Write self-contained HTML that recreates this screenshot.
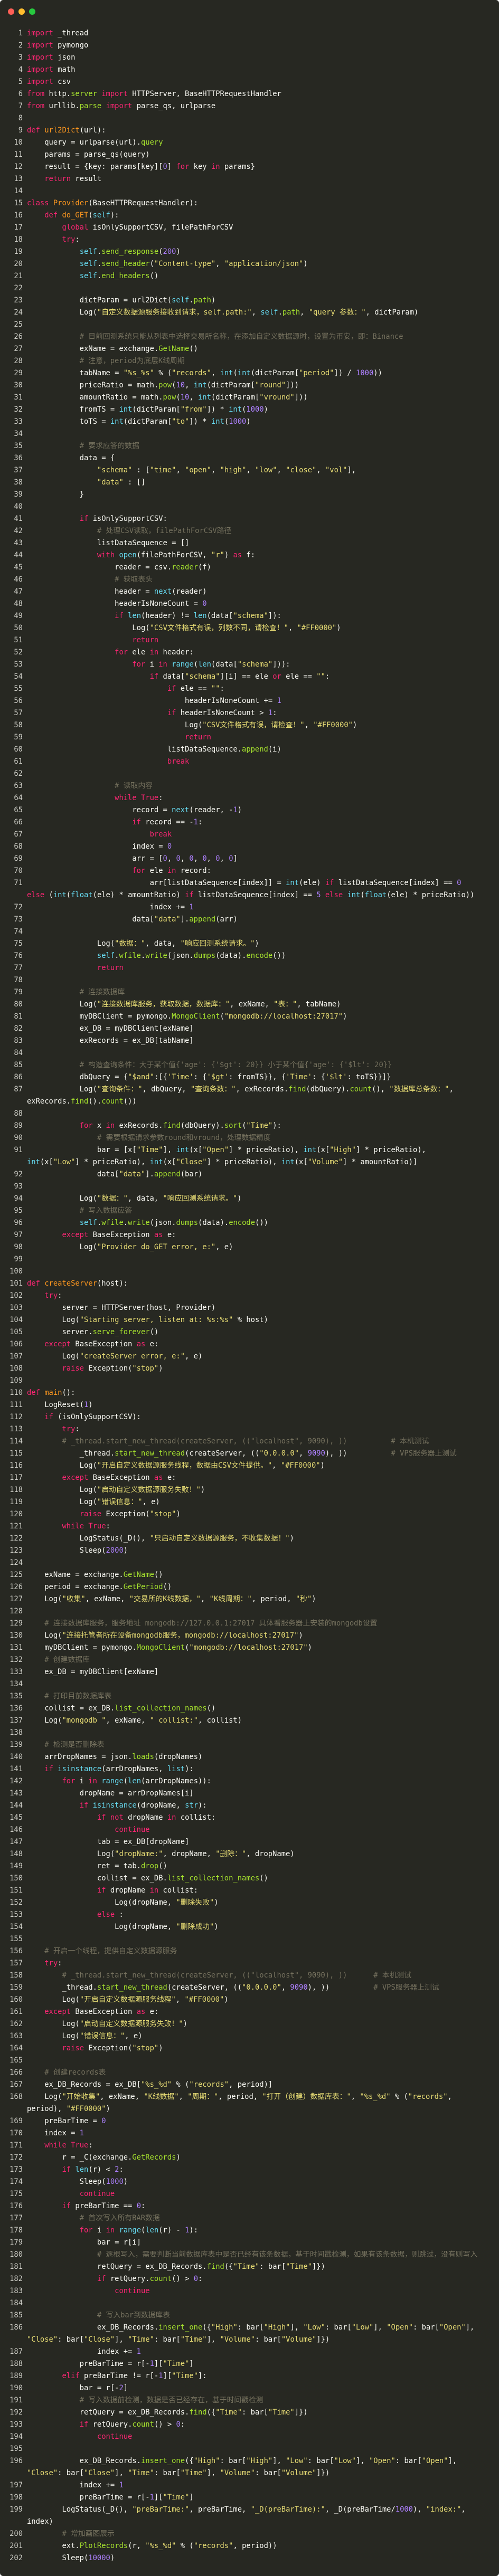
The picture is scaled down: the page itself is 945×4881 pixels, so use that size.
<!DOCTYPE html>
<html><head><meta charset="utf-8">
<style>
html,body{margin:0;padding:0;background:#fff;}
.win{position:absolute;left:0;top:0;width:945px;height:4881px;background:#272822;border-radius:6px;overflow:hidden;}
.dot{position:absolute;top:16px;width:12px;height:12px;border-radius:50%;}
.code{position:absolute;left:0;top:52px;font-family:"DejaVu Sans Mono","Liberation Mono","Noto Sans CJK SC",monospace;font-size:13.8px;line-height:23px;color:#f8f8f2;}
.code div{height:23px;white-space:pre;}
.ln{display:inline-block;width:43px;text-align:right;margin-right:8px;color:#cfcfc8;}
.k{color:#f92672}.f{color:#fd971f}.g{color:#a6e22e}.s{color:#e6db74}.n{color:#ae81ff}.c{color:#75715e}.b{color:#66d9ef}
</style></head><body>
<div class="win">
<div class="dot" style="left:15px;background:#ff5f56"></div>
<div class="dot" style="left:35px;background:#ffbd2e"></div>
<div class="dot" style="left:55px;background:#27c93f"></div>
<div class="code">
<div><span class="ln">1</span><span class="k">import</span> _thread</div>
<div><span class="ln">2</span><span class="k">import</span> pymongo</div>
<div><span class="ln">3</span><span class="k">import</span> json</div>
<div><span class="ln">4</span><span class="k">import</span> math</div>
<div><span class="ln">5</span><span class="k">import</span> csv</div>
<div><span class="ln">6</span><span class="k">from</span> http.<span class="g">server</span> <span class="k">import</span> HTTPServer, BaseHTTPRequestHandler</div>
<div><span class="ln">7</span><span class="k">from</span> urllib.<span class="g">parse</span> <span class="k">import</span> parse_qs, urlparse</div>
<div><span class="ln">8</span></div>
<div><span class="ln">9</span><span class="k">def</span> <span class="f">url2Dict</span>(url):</div>
<div><span class="ln">10</span>    query = urlparse(url).<span class="g">query</span></div>
<div><span class="ln">11</span>    params = parse_qs(query)</div>
<div><span class="ln">12</span>    result = {key: params[key][<span class="n">0</span>] <span class="k">for</span> key <span class="k">in</span> params}</div>
<div><span class="ln">13</span>    <span class="k">return</span> result</div>
<div><span class="ln">14</span></div>
<div><span class="ln">15</span><span class="k">class</span> <span class="f">Provider</span>(BaseHTTPRequestHandler):</div>
<div><span class="ln">16</span>    <span class="k">def</span> <span class="f">do_GET</span>(<span class="b">self</span>):</div>
<div><span class="ln">17</span>        <span class="k">global</span> isOnlySupportCSV, filePathForCSV</div>
<div><span class="ln">18</span>        <span class="k">try</span>:</div>
<div><span class="ln">19</span>            <span class="b">self</span>.<span class="g">send_response</span>(<span class="n">200</span>)</div>
<div><span class="ln">20</span>            <span class="b">self</span>.<span class="g">send_header</span>(<span class="s">"Content-type"</span>, <span class="s">"application/json"</span>)</div>
<div><span class="ln">21</span>            <span class="b">self</span>.<span class="g">end_headers</span>()</div>
<div><span class="ln">22</span></div>
<div><span class="ln">23</span>            dictParam = url2Dict(<span class="b">self</span>.<span class="g">path</span>)</div>
<div><span class="ln">24</span>            Log(<span class="s">"自定义数据源服务接收到请求，self.path:"</span>, <span class="b">self</span>.<span class="g">path</span>, <span class="s">"query 参数："</span>, dictParam)</div>
<div><span class="ln">25</span></div>
<div><span class="ln">26</span>            <span class="c"># 目前回测系统只能从列表中选择交易所名称，在添加自定义数据源时，设置为币安，即：Binance</span></div>
<div><span class="ln">27</span>            exName = exchange.<span class="g">GetName</span>()</div>
<div><span class="ln">28</span>            <span class="c"># 注意，period为底层K线周期</span></div>
<div><span class="ln">29</span>            tabName = <span class="s">"%s_%s"</span> % (<span class="s">"records"</span>, <span class="b">int</span>(<span class="b">int</span>(dictParam[<span class="s">"period"</span>]) / <span class="n">1000</span>))</div>
<div><span class="ln">30</span>            priceRatio = math.<span class="g">pow</span>(<span class="n">10</span>, <span class="b">int</span>(dictParam[<span class="s">"round"</span>]))</div>
<div><span class="ln">31</span>            amountRatio = math.<span class="g">pow</span>(<span class="n">10</span>, <span class="b">int</span>(dictParam[<span class="s">"vround"</span>]))</div>
<div><span class="ln">32</span>            fromTS = <span class="b">int</span>(dictParam[<span class="s">"from"</span>]) * <span class="b">int</span>(<span class="n">1000</span>)</div>
<div><span class="ln">33</span>            toTS = <span class="b">int</span>(dictParam[<span class="s">"to"</span>]) * <span class="b">int</span>(<span class="n">1000</span>)</div>
<div><span class="ln">34</span></div>
<div><span class="ln">35</span>            <span class="c"># 要求应答的数据</span></div>
<div><span class="ln">36</span>            data = {</div>
<div><span class="ln">37</span>                <span class="s">"schema"</span> : [<span class="s">"time"</span>, <span class="s">"open"</span>, <span class="s">"high"</span>, <span class="s">"low"</span>, <span class="s">"close"</span>, <span class="s">"vol"</span>],</div>
<div><span class="ln">38</span>                <span class="s">"data"</span> : []</div>
<div><span class="ln">39</span>            }</div>
<div><span class="ln">40</span></div>
<div><span class="ln">41</span>            <span class="k">if</span> isOnlySupportCSV:</div>
<div><span class="ln">42</span>                <span class="c"># 处理CSV读取，filePathForCSV路径</span></div>
<div><span class="ln">43</span>                listDataSequence = []</div>
<div><span class="ln">44</span>                <span class="k">with</span> <span class="b">open</span>(filePathForCSV, <span class="s">"r"</span>) <span class="k">as</span> f:</div>
<div><span class="ln">45</span>                    reader = csv.<span class="g">reader</span>(f)</div>
<div><span class="ln">46</span>                    <span class="c"># 获取表头</span></div>
<div><span class="ln">47</span>                    header = <span class="b">next</span>(reader)</div>
<div><span class="ln">48</span>                    headerIsNoneCount = <span class="n">0</span></div>
<div><span class="ln">49</span>                    <span class="k">if</span> <span class="b">len</span>(header) != <span class="b">len</span>(data[<span class="s">"schema"</span>]):</div>
<div><span class="ln">50</span>                        Log(<span class="s">"CSV文件格式有误，列数不同，请检查！"</span>, <span class="s">"#FF0000"</span>)</div>
<div><span class="ln">51</span>                        <span class="k">return</span></div>
<div><span class="ln">52</span>                    <span class="k">for</span> ele <span class="k">in</span> header:</div>
<div><span class="ln">53</span>                        <span class="k">for</span> i <span class="k">in</span> <span class="b">range</span>(<span class="b">len</span>(data[<span class="s">"schema"</span>])):</div>
<div><span class="ln">54</span>                            <span class="k">if</span> data[<span class="s">"schema"</span>][i] == ele <span class="k">or</span> ele == <span class="s">""</span>:</div>
<div><span class="ln">55</span>                                <span class="k">if</span> ele == <span class="s">""</span>:</div>
<div><span class="ln">56</span>                                    headerIsNoneCount += <span class="n">1</span></div>
<div><span class="ln">57</span>                                <span class="k">if</span> headerIsNoneCount &gt; <span class="n">1</span>:</div>
<div><span class="ln">58</span>                                    Log(<span class="s">"CSV文件格式有误，请检查！"</span>, <span class="s">"#FF0000"</span>)</div>
<div><span class="ln">59</span>                                    <span class="k">return</span></div>
<div><span class="ln">60</span>                                listDataSequence.<span class="g">append</span>(i)</div>
<div><span class="ln">61</span>                                <span class="k">break</span></div>
<div><span class="ln">62</span></div>
<div><span class="ln">63</span>                    <span class="c"># 读取内容</span></div>
<div><span class="ln">64</span>                    <span class="k">while</span> <span class="k">True</span>:</div>
<div><span class="ln">65</span>                        record = <span class="b">next</span>(reader, -<span class="n">1</span>)</div>
<div><span class="ln">66</span>                        <span class="k">if</span> record == -<span class="n">1</span>:</div>
<div><span class="ln">67</span>                            <span class="k">break</span></div>
<div><span class="ln">68</span>                        index = <span class="n">0</span></div>
<div><span class="ln">69</span>                        arr = [<span class="n">0</span>, <span class="n">0</span>, <span class="n">0</span>, <span class="n">0</span>, <span class="n">0</span>, <span class="n">0</span>]</div>
<div><span class="ln">70</span>                        <span class="k">for</span> ele <span class="k">in</span> record:</div>
<div><span class="ln">71</span>                            arr[listDataSequence[index]] = <span class="b">int</span>(ele) <span class="k">if</span> listDataSequence[index] == <span class="n">0</span></div>
<div><span class="ln"></span><span class="k">else</span> (<span class="b">int</span>(<span class="b">float</span>(ele) * amountRatio) <span class="k">if</span> listDataSequence[index] == <span class="n">5</span> <span class="k">else</span> <span class="b">int</span>(<span class="b">float</span>(ele) * priceRatio))</div>
<div><span class="ln">72</span>                            index += <span class="n">1</span></div>
<div><span class="ln">73</span>                        data[<span class="s">"data"</span>].<span class="g">append</span>(arr)</div>
<div><span class="ln">74</span></div>
<div><span class="ln">75</span>                Log(<span class="s">"数据："</span>, data, <span class="s">"响应回测系统请求。"</span>)</div>
<div><span class="ln">76</span>                <span class="b">self</span>.<span class="g">wfile</span>.<span class="g">write</span>(json.<span class="g">dumps</span>(data).<span class="g">encode</span>())</div>
<div><span class="ln">77</span>                <span class="k">return</span></div>
<div><span class="ln">78</span></div>
<div><span class="ln">79</span>            <span class="c"># 连接数据库</span></div>
<div><span class="ln">80</span>            Log(<span class="s">"连接数据库服务，获取数据，数据库："</span>, exName, <span class="s">"表："</span>, tabName)</div>
<div><span class="ln">81</span>            myDBClient = pymongo.<span class="g">MongoClient</span>(<span class="s">"mongodb://localhost:27017"</span>)</div>
<div><span class="ln">82</span>            ex_DB = myDBClient[exName]</div>
<div><span class="ln">83</span>            exRecords = ex_DB[tabName]</div>
<div><span class="ln">84</span></div>
<div><span class="ln">85</span>            <span class="c"># 构造查询条件：大于某个值{'age': {'$gt': 20}} 小于某个值{'age': {'$lt': 20}}</span></div>
<div><span class="ln">86</span>            dbQuery = {<span class="s">"$and"</span>:[{<span class="s">'Time'</span>: {<span class="s">'$gt'</span>: fromTS}}, {<span class="s">'Time'</span>: {<span class="s">'$lt'</span>: toTS}}]}</div>
<div><span class="ln">87</span>            Log(<span class="s">"查询条件："</span>, dbQuery, <span class="s">"查询条数："</span>, exRecords.<span class="g">find</span>(dbQuery).<span class="g">count</span>(), <span class="s">"数据库总条数："</span>,</div>
<div><span class="ln"></span>exRecords.<span class="g">find</span>().<span class="g">count</span>())</div>
<div><span class="ln">88</span></div>
<div><span class="ln">89</span>            <span class="k">for</span> x <span class="k">in</span> exRecords.<span class="g">find</span>(dbQuery).<span class="g">sort</span>(<span class="s">"Time"</span>):</div>
<div><span class="ln">90</span>                <span class="c"># 需要根据请求参数round和vround，处理数据精度</span></div>
<div><span class="ln">91</span>                bar = [x[<span class="s">"Time"</span>], <span class="b">int</span>(x[<span class="s">"Open"</span>] * priceRatio), <span class="b">int</span>(x[<span class="s">"High"</span>] * priceRatio),</div>
<div><span class="ln"></span><span class="b">int</span>(x[<span class="s">"Low"</span>] * priceRatio), <span class="b">int</span>(x[<span class="s">"Close"</span>] * priceRatio), <span class="b">int</span>(x[<span class="s">"Volume"</span>] * amountRatio)]</div>
<div><span class="ln">92</span>                data[<span class="s">"data"</span>].<span class="g">append</span>(bar)</div>
<div><span class="ln">93</span></div>
<div><span class="ln">94</span>            Log(<span class="s">"数据："</span>, data, <span class="s">"响应回测系统请求。"</span>)</div>
<div><span class="ln">95</span>            <span class="c"># 写入数据应答</span></div>
<div><span class="ln">96</span>            <span class="b">self</span>.<span class="g">wfile</span>.<span class="g">write</span>(json.<span class="g">dumps</span>(data).<span class="g">encode</span>())</div>
<div><span class="ln">97</span>        <span class="k">except</span> BaseException <span class="k">as</span> e:</div>
<div><span class="ln">98</span>            Log(<span class="s">"Provider do_GET error, e:"</span>, e)</div>
<div><span class="ln">99</span></div>
<div><span class="ln">100</span></div>
<div><span class="ln">101</span><span class="k">def</span> <span class="f">createServer</span>(host):</div>
<div><span class="ln">102</span>    <span class="k">try</span>:</div>
<div><span class="ln">103</span>        server = HTTPServer(host, Provider)</div>
<div><span class="ln">104</span>        Log(<span class="s">"Starting server, listen at: %s:%s"</span> % host)</div>
<div><span class="ln">105</span>        server.<span class="g">serve_forever</span>()</div>
<div><span class="ln">106</span>    <span class="k">except</span> BaseException <span class="k">as</span> e:</div>
<div><span class="ln">107</span>        Log(<span class="s">"createServer error, e:"</span>, e)</div>
<div><span class="ln">108</span>        <span class="k">raise</span> Exception(<span class="s">"stop"</span>)</div>
<div><span class="ln">109</span></div>
<div><span class="ln">110</span><span class="k">def</span> <span class="f">main</span>():</div>
<div><span class="ln">111</span>    LogReset(<span class="n">1</span>)</div>
<div><span class="ln">112</span>    <span class="k">if</span> (isOnlySupportCSV):</div>
<div><span class="ln">113</span>        <span class="k">try</span>:</div>
<div><span class="ln">114</span>        <span class="c"># _thread.start_new_thread(createServer, (("localhost", 9090), ))          # 本机测试</span></div>
<div><span class="ln">115</span>            _thread.<span class="g">start_new_thread</span>(createServer, ((<span class="s">"0.0.0.0"</span>, <span class="n">9090</span>), ))          <span class="c"># VPS服务器上测试</span></div>
<div><span class="ln">116</span>            Log(<span class="s">"开启自定义数据源服务线程，数据由CSV文件提供。"</span>, <span class="s">"#FF0000"</span>)</div>
<div><span class="ln">117</span>        <span class="k">except</span> BaseException <span class="k">as</span> e:</div>
<div><span class="ln">118</span>            Log(<span class="s">"启动自定义数据源服务失败！"</span>)</div>
<div><span class="ln">119</span>            Log(<span class="s">"错误信息："</span>, e)</div>
<div><span class="ln">120</span>            <span class="k">raise</span> Exception(<span class="s">"stop"</span>)</div>
<div><span class="ln">121</span>        <span class="k">while</span> <span class="k">True</span>:</div>
<div><span class="ln">122</span>            LogStatus(_D(), <span class="s">"只启动自定义数据源服务，不收集数据！"</span>)</div>
<div><span class="ln">123</span>            Sleep(<span class="n">2000</span>)</div>
<div><span class="ln">124</span></div>
<div><span class="ln">125</span>    exName = exchange.<span class="g">GetName</span>()</div>
<div><span class="ln">126</span>    period = exchange.<span class="g">GetPeriod</span>()</div>
<div><span class="ln">127</span>    Log(<span class="s">"收集"</span>, exName, <span class="s">"交易所的K线数据，"</span>, <span class="s">"K线周期："</span>, period, <span class="s">"秒"</span>)</div>
<div><span class="ln">128</span></div>
<div><span class="ln">129</span>    <span class="c"># 连接数据库服务，服务地址 mongodb://127.0.0.1:27017 具体看服务器上安装的mongodb设置</span></div>
<div><span class="ln">130</span>    Log(<span class="s">"连接托管者所在设备mongodb服务，mongodb://localhost:27017"</span>)</div>
<div><span class="ln">131</span>    myDBClient = pymongo.<span class="g">MongoClient</span>(<span class="s">"mongodb://localhost:27017"</span>)</div>
<div><span class="ln">132</span>    <span class="c"># 创建数据库</span></div>
<div><span class="ln">133</span>    ex_DB = myDBClient[exName]</div>
<div><span class="ln">134</span></div>
<div><span class="ln">135</span>    <span class="c"># 打印目前数据库表</span></div>
<div><span class="ln">136</span>    collist = ex_DB.<span class="g">list_collection_names</span>()</div>
<div><span class="ln">137</span>    Log(<span class="s">"mongodb "</span>, exName, <span class="s">" collist:"</span>, collist)</div>
<div><span class="ln">138</span></div>
<div><span class="ln">139</span>    <span class="c"># 检测是否删除表</span></div>
<div><span class="ln">140</span>    arrDropNames = json.<span class="g">loads</span>(dropNames)</div>
<div><span class="ln">141</span>    <span class="k">if</span> <span class="b">isinstance</span>(arrDropNames, <span class="b">list</span>):</div>
<div><span class="ln">142</span>        <span class="k">for</span> i <span class="k">in</span> <span class="b">range</span>(<span class="b">len</span>(arrDropNames)):</div>
<div><span class="ln">143</span>            dropName = arrDropNames[i]</div>
<div><span class="ln">144</span>            <span class="k">if</span> <span class="b">isinstance</span>(dropName, <span class="b">str</span>):</div>
<div><span class="ln">145</span>                <span class="k">if</span> <span class="k">not</span> dropName <span class="k">in</span> collist:</div>
<div><span class="ln">146</span>                    <span class="k">continue</span></div>
<div><span class="ln">147</span>                tab = ex_DB[dropName]</div>
<div><span class="ln">148</span>                Log(<span class="s">"dropName:"</span>, dropName, <span class="s">"删除："</span>, dropName)</div>
<div><span class="ln">149</span>                ret = tab.<span class="g">drop</span>()</div>
<div><span class="ln">150</span>                collist = ex_DB.<span class="g">list_collection_names</span>()</div>
<div><span class="ln">151</span>                <span class="k">if</span> dropName <span class="k">in</span> collist:</div>
<div><span class="ln">152</span>                    Log(dropName, <span class="s">"删除失败"</span>)</div>
<div><span class="ln">153</span>                <span class="k">else</span> :</div>
<div><span class="ln">154</span>                    Log(dropName, <span class="s">"删除成功"</span>)</div>
<div><span class="ln">155</span></div>
<div><span class="ln">156</span>    <span class="c"># 开启一个线程，提供自定义数据源服务</span></div>
<div><span class="ln">157</span>    <span class="k">try</span>:</div>
<div><span class="ln">158</span>        <span class="c"># _thread.start_new_thread(createServer, (("localhost", 9090), ))      # 本机测试</span></div>
<div><span class="ln">159</span>        _thread.<span class="g">start_new_thread</span>(createServer, ((<span class="s">"0.0.0.0"</span>, <span class="n">9090</span>), ))          <span class="c"># VPS服务器上测试</span></div>
<div><span class="ln">160</span>        Log(<span class="s">"开启自定义数据源服务线程"</span>, <span class="s">"#FF0000"</span>)</div>
<div><span class="ln">161</span>    <span class="k">except</span> BaseException <span class="k">as</span> e:</div>
<div><span class="ln">162</span>        Log(<span class="s">"启动自定义数据源服务失败！"</span>)</div>
<div><span class="ln">163</span>        Log(<span class="s">"错误信息："</span>, e)</div>
<div><span class="ln">164</span>        <span class="k">raise</span> Exception(<span class="s">"stop"</span>)</div>
<div><span class="ln">165</span></div>
<div><span class="ln">166</span>    <span class="c"># 创建records表</span></div>
<div><span class="ln">167</span>    ex_DB_Records = ex_DB[<span class="s">"%s_%d"</span> % (<span class="s">"records"</span>, period)]</div>
<div><span class="ln">168</span>    Log(<span class="s">"开始收集"</span>, exName, <span class="s">"K线数据"</span>, <span class="s">"周期："</span>, period, <span class="s">"打开（创建）数据库表："</span>, <span class="s">"%s_%d"</span> % (<span class="s">"records"</span>,</div>
<div><span class="ln"></span>period), <span class="s">"#FF0000"</span>)</div>
<div><span class="ln">169</span>    preBarTime = <span class="n">0</span></div>
<div><span class="ln">170</span>    index = <span class="n">1</span></div>
<div><span class="ln">171</span>    <span class="k">while</span> <span class="k">True</span>:</div>
<div><span class="ln">172</span>        r = _C(exchange.<span class="g">GetRecords</span>)</div>
<div><span class="ln">173</span>        <span class="k">if</span> <span class="b">len</span>(r) &lt; <span class="n">2</span>:</div>
<div><span class="ln">174</span>            Sleep(<span class="n">1000</span>)</div>
<div><span class="ln">175</span>            <span class="k">continue</span></div>
<div><span class="ln">176</span>        <span class="k">if</span> preBarTime == <span class="n">0</span>:</div>
<div><span class="ln">177</span>            <span class="c"># 首次写入所有BAR数据</span></div>
<div><span class="ln">178</span>            <span class="k">for</span> i <span class="k">in</span> <span class="b">range</span>(<span class="b">len</span>(r) - <span class="n">1</span>):</div>
<div><span class="ln">179</span>                bar = r[i]</div>
<div><span class="ln">180</span>                <span class="c"># 逐根写入，需要判断当前数据库表中是否已经有该条数据，基于时间戳检测，如果有该条数据，则跳过，没有则写入</span></div>
<div><span class="ln">181</span>                retQuery = ex_DB_Records.<span class="g">find</span>({<span class="s">"Time"</span>: bar[<span class="s">"Time"</span>]})</div>
<div><span class="ln">182</span>                <span class="k">if</span> retQuery.<span class="g">count</span>() &gt; <span class="n">0</span>:</div>
<div><span class="ln">183</span>                    <span class="k">continue</span></div>
<div><span class="ln">184</span></div>
<div><span class="ln">185</span>                <span class="c"># 写入bar到数据库表</span></div>
<div><span class="ln">186</span>                ex_DB_Records.<span class="g">insert_one</span>({<span class="s">"High"</span>: bar[<span class="s">"High"</span>], <span class="s">"Low"</span>: bar[<span class="s">"Low"</span>], <span class="s">"Open"</span>: bar[<span class="s">"Open"</span>],</div>
<div><span class="ln"></span><span class="s">"Close"</span>: bar[<span class="s">"Close"</span>], <span class="s">"Time"</span>: bar[<span class="s">"Time"</span>], <span class="s">"Volume"</span>: bar[<span class="s">"Volume"</span>]})</div>
<div><span class="ln">187</span>                index += <span class="n">1</span></div>
<div><span class="ln">188</span>            preBarTime = r[-<span class="n">1</span>][<span class="s">"Time"</span>]</div>
<div><span class="ln">189</span>        <span class="k">elif</span> preBarTime != r[-<span class="n">1</span>][<span class="s">"Time"</span>]:</div>
<div><span class="ln">190</span>            bar = r[-<span class="n">2</span>]</div>
<div><span class="ln">191</span>            <span class="c"># 写入数据前检测，数据是否已经存在，基于时间戳检测</span></div>
<div><span class="ln">192</span>            retQuery = ex_DB_Records.<span class="g">find</span>({<span class="s">"Time"</span>: bar[<span class="s">"Time"</span>]})</div>
<div><span class="ln">193</span>            <span class="k">if</span> retQuery.<span class="g">count</span>() &gt; <span class="n">0</span>:</div>
<div><span class="ln">194</span>                <span class="k">continue</span></div>
<div><span class="ln">195</span></div>
<div><span class="ln">196</span>            ex_DB_Records.<span class="g">insert_one</span>({<span class="s">"High"</span>: bar[<span class="s">"High"</span>], <span class="s">"Low"</span>: bar[<span class="s">"Low"</span>], <span class="s">"Open"</span>: bar[<span class="s">"Open"</span>],</div>
<div><span class="ln"></span><span class="s">"Close"</span>: bar[<span class="s">"Close"</span>], <span class="s">"Time"</span>: bar[<span class="s">"Time"</span>], <span class="s">"Volume"</span>: bar[<span class="s">"Volume"</span>]})</div>
<div><span class="ln">197</span>            index += <span class="n">1</span></div>
<div><span class="ln">198</span>            preBarTime = r[-<span class="n">1</span>][<span class="s">"Time"</span>]</div>
<div><span class="ln">199</span>        LogStatus(_D(), <span class="s">"preBarTime:"</span>, preBarTime, <span class="s">"_D(preBarTime):"</span>, _D(preBarTime/<span class="n">1000</span>), <span class="s">"index:"</span>,</div>
<div><span class="ln"></span>index)</div>
<div><span class="ln">200</span>        <span class="c"># 增加画图展示</span></div>
<div><span class="ln">201</span>        ext.<span class="g">PlotRecords</span>(r, <span class="s">"%s_%d"</span> % (<span class="s">"records"</span>, period))</div>
<div><span class="ln">202</span>        Sleep(<span class="n">10000</span>)</div>
</div>
</div>
</body></html>
